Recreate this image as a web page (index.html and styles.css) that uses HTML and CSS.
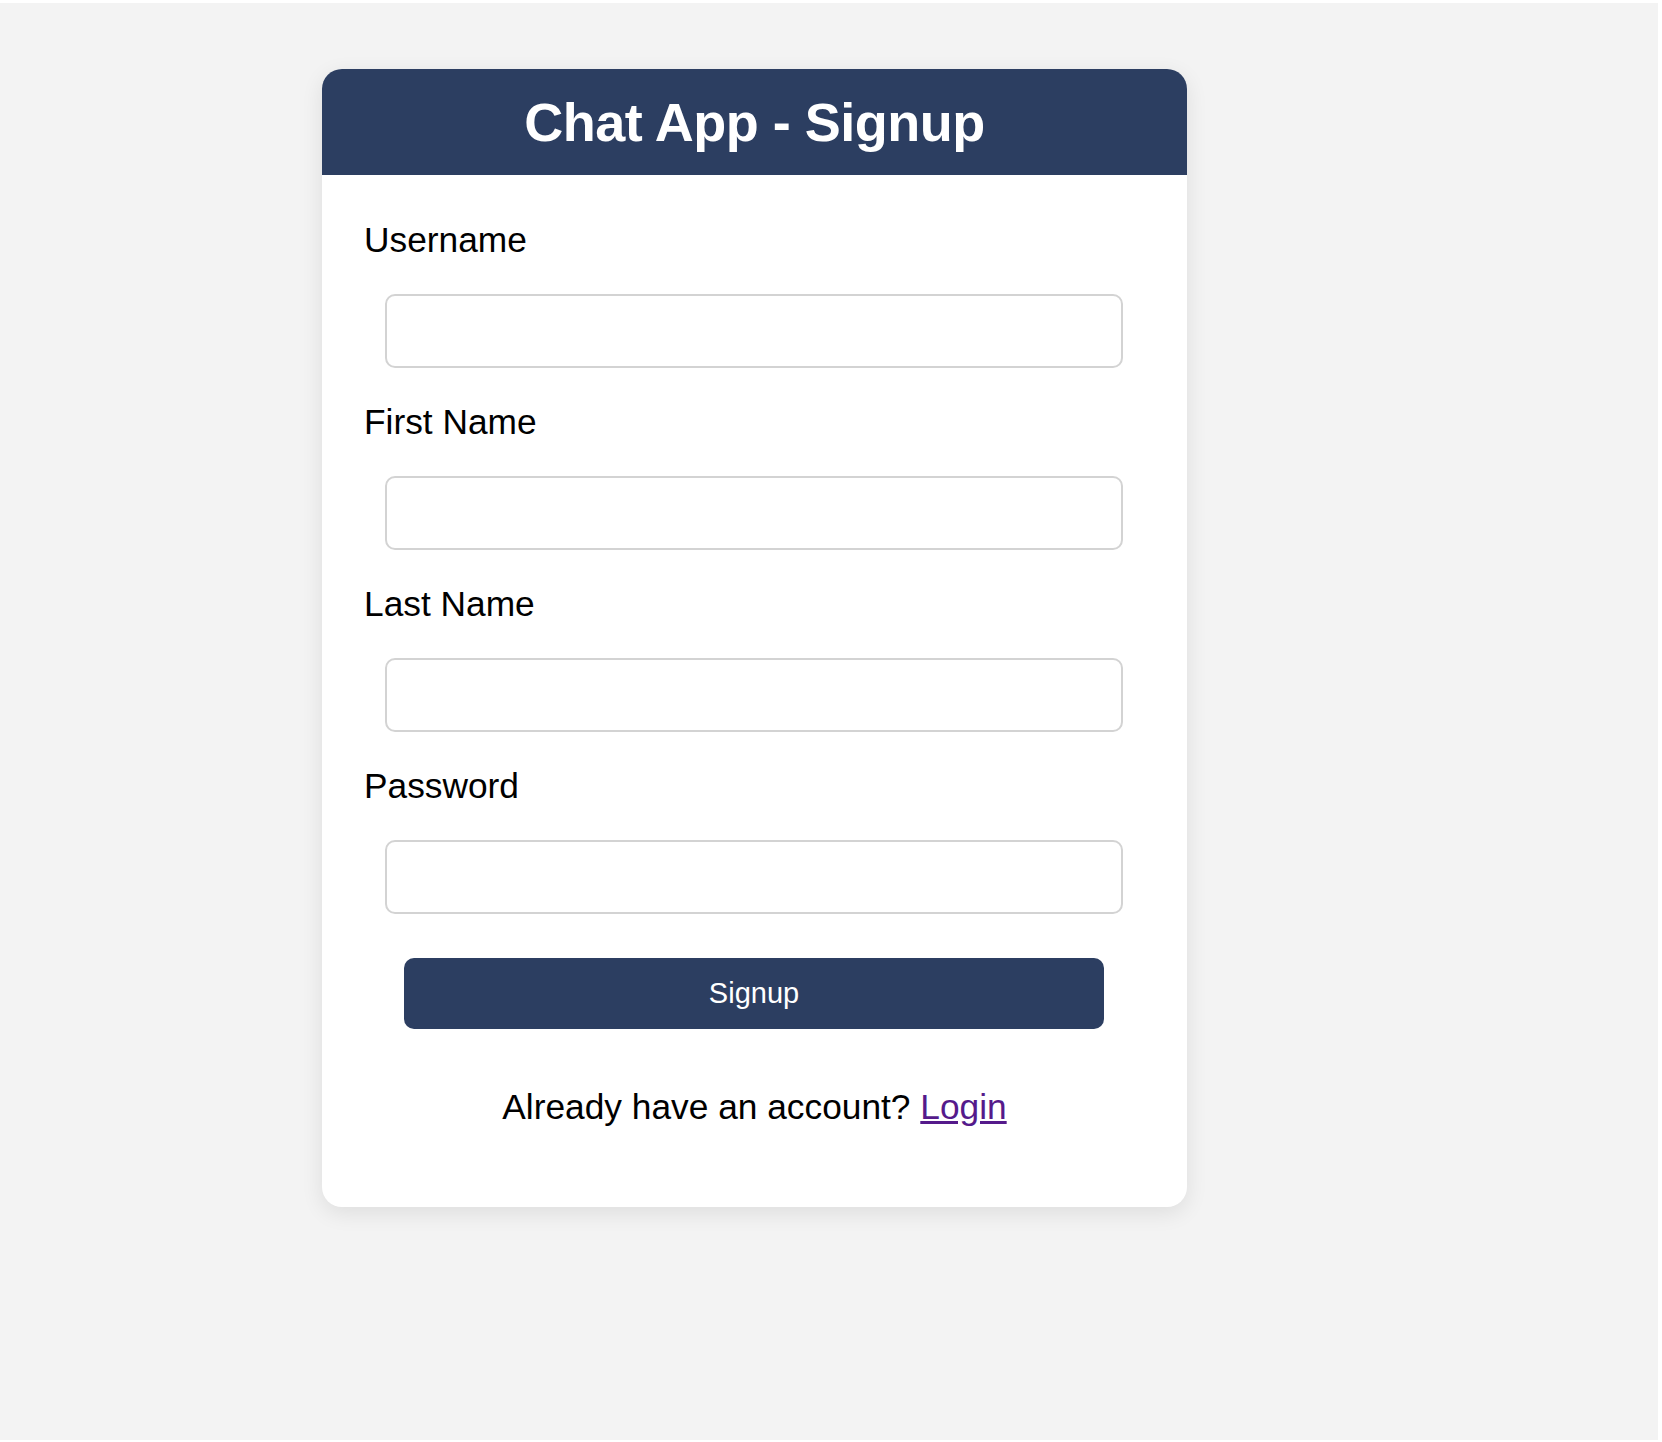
FILE: index.html
```html
<!DOCTYPE html>
<html lang="en">
<head>
<meta charset="utf-8">
<title>Chat App - Signup</title>
<link rel="stylesheet" href="styles.css">
</head>
<body>
<div class="page">
  <div class="card">
    <div class="card-header">
      <h1 class="title">Chat App - Signup</h1>
    </div>
    <form class="form">
      <div class="field">
        <label class="label" for="username">Username</label>
        <input class="input" id="username" type="text">
      </div>
      <div class="field">
        <label class="label" for="first">First Name</label>
        <input class="input" id="first" type="text">
      </div>
      <div class="field">
        <label class="label" for="last">Last Name</label>
        <input class="input" id="last" type="text">
      </div>
      <div class="field">
        <label class="label" for="password">Password</label>
        <input class="input" id="password" type="password">
      </div>
      <button class="btn" type="button">Signup</button>
      <p class="switch">Already have an account? <a class="link" href="#login">Login</a></p>
    </form>
  </div>
</div>
</body>
</html>
```
FILE: styles.css
```css
html, body {
  margin: 0;
  padding: 0;
  background: #ffffff;
}
body {
  font-family: "Liberation Sans", Arial, Helvetica, sans-serif;
  color: #000;
}
.page {
  margin-top: 3px;
  width: 1658px;
  height: 1437px;
  background: #f3f3f3;
  overflow: hidden;
  display: flex;
  align-items: flex-start;
}
.card {
  margin: 66px 0 0 322px;
  width: 865px;
  background: #ffffff;
  border-radius: 20px;
  box-shadow: 0 6px 22px rgba(0, 0, 0, 0.09);
  overflow: hidden;
}
.card-header {
  background: #2c3e61;
  padding: 23px 0 23px;
  text-align: center;
}
.title {
  margin: 0;
  color: #ffffff;
  font-size: 54px;
  letter-spacing: -0.5px;
  line-height: 60px;
  font-weight: 700;
}
.form {
  padding: 45px 0 80px;
  display: flex;
  flex-direction: column;
}
.field {
  display: flex;
  flex-direction: column;
  padding-bottom: 34px;
}
.label {
  font-size: 35.3px;
  line-height: 40px;
  padding-left: 42px;
  margin-bottom: 34px;
}
.input {
  margin: 0 64px 0 63px;
  height: 74px;
  box-sizing: border-box;
  border: 2px solid #d3d3d3;
  border-radius: 10px;
  background: #fff;
  font-size: 29px;
  padding: 0 16px;
  outline: none;
}
.btn {
  margin: 10px 83px 0 82px;
  height: 71px;
  border: none;
  border-radius: 10px;
  background: #2c3e61;
  color: #ffffff;
  font-family: "Liberation Sans", Arial, sans-serif;
  font-size: 29px;
  cursor: pointer;
}
.switch {
  margin: 58px 0 0;
  text-align: center;
  font-size: 35.3px;
  line-height: 40px;
}
.link {
  color: #551a8b;
  text-decoration: underline;
}
```
